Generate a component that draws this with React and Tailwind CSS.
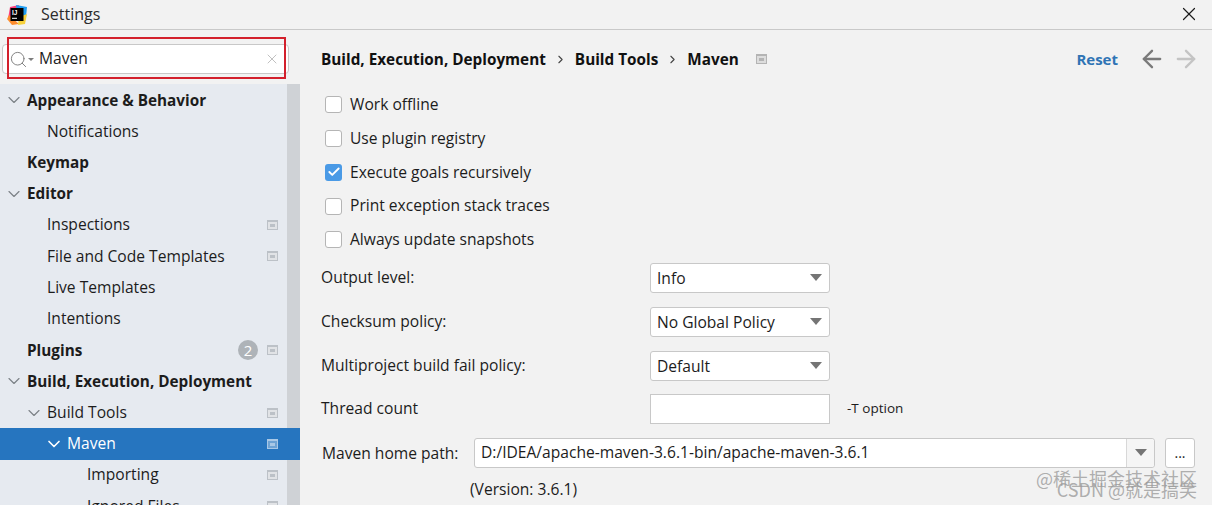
import { ChevronDown, ChevronRight, X, ArrowLeft, ArrowRight, Search, Check } from 'lucide-react';

const font = "font-['Open_Sans','Noto_Sans',sans-serif]";

const ProjectIcon = ({ inner = '#ffffff', opacity = 0.55 }) => (
  <svg width="11" height="10" viewBox="0 0 11 10" className="shrink-0 block">
    <rect x="0" y="0" width="11" height="10" fill="currentColor" />
    <rect x="1" y="2" width="9" height="7" fill={inner} fillOpacity={opacity} />
    <rect x="3" y="4" width="5" height="3" fill="currentColor" />
  </svg>
);

const treeItems = [
  { label: 'Appearance & Behavior', bold: true, arrow: true, indent: 0 },
  { label: 'Notifications', indent: 1 },
  { label: 'Keymap', bold: true, indent: 0 },
  { label: 'Editor', bold: true, arrow: true, indent: 0 },
  { label: 'Inspections', indent: 1, project: true },
  { label: 'File and Code Templates', indent: 1, project: true },
  { label: 'Live Templates', indent: 1 },
  { label: 'Intentions', indent: 1 },
  { label: 'Plugins', bold: true, indent: 0, badge: '2', project: true },
  { label: 'Build, Execution, Deployment', bold: true, arrow: true, indent: 0 },
  { label: 'Build Tools', indent: 1, arrow: true, project: true },
  { label: 'Maven', indent: 2, arrow: true, project: true, selected: true },
  { label: 'Importing', indent: 3, project: true },
  { label: 'Ignored Files', indent: 3, project: true },
];

const indentClass = ['pl-[27px]', 'pl-[47px]', 'pl-[67px]', 'pl-[87px]'];
const arrowClass = ['left-[4px]', 'left-[24px]', 'left-[44px]', 'left-[64px]'];

const TreeRow = ({ item }) => (
  <div className={`relative h-[31.25px] shrink-0 flex items-center pr-[22px] ${indentClass[item.indent]} ${item.selected ? 'bg-[#2675bf] text-white' : 'text-[#1c1c1c]'} ${item.bold ? 'font-bold text-[15.3px]' : 'text-[15.6px]'}`}>
    {item.arrow && (
      <ChevronDown size={20} strokeWidth={item.selected ? 2 : 1.4} className={`absolute ${arrowClass[item.indent]} ${item.selected ? 'text-white' : 'text-[#7d8287]'}`} />
    )}
    <span className="flex-1 whitespace-nowrap">{item.label}</span>
    {item.badge && (
      <span className="w-[20px] h-[20px] mr-[9px] rounded-full bg-[#aeb3b8] text-white text-[15px] font-normal flex items-center justify-center">{item.badge}</span>
    )}
    {item.project && (
      <span className={item.selected ? 'text-[#a9c8e6]' : 'text-[#bcc1c7]'}>
        {item.selected ? <ProjectIcon inner="#2675bf" opacity={0.45} /> : <ProjectIcon />}
      </span>
    )}
  </div>
);

const CheckRow = ({ label, checked }) => (
  <div className="h-[33.75px] flex items-center gap-[8px] pl-[25px]">
    {checked ? (
      <span className="w-[17px] h-[17px] rounded-[3px] bg-[#4a9ae6] flex items-center justify-center">
        <Check size={14} strokeWidth={3.2} className="text-white" />
      </span>
    ) : (
      <span className="w-[17px] h-[17px] rounded-[3px] border border-[#b5b5b5] bg-white" />
    )}
    <span className="text-[15.6px] text-[#1c1c1c]">{label}</span>
  </div>
);

const Caret = () => (
  <span className="w-0 h-0 border-x-[6px] border-x-transparent border-t-[7px] border-t-[#757575]" />
);

const SelectRow = ({ label, value }) => (
  <div className="h-[44px] flex items-center">
    <span className="w-[350px] pl-[21px] text-[15.6px] text-[#1c1c1c]">{label}</span>
    <div className="w-[180px] h-[30px] pl-[6px] pr-[7px] rounded-[3px] border border-[#c8c8c8] bg-white flex items-center justify-between text-[15.6px] text-[#1c1c1c]">
      <span className="mt-[2px]">{value}</span>
      <Caret />
    </div>
  </div>
);

export default function App() {
  return (
    <div className={`w-[1212px] h-[505px] overflow-hidden bg-[#f2f2f2] flex flex-col ${font}`}>
      <div className="h-[30px] shrink-0 border-b border-[#c9c9c9] flex items-center pl-[7px] pr-[12px]">
        <svg width="20" height="20" viewBox="0 0 20 20" className="shrink-0">
          <path d="M3 2 L12 0 L8 12 L1 14 Z" fill="#fc3f7a" />
          <path d="M9 0 L20 2 L19 12 L10 8 Z" fill="#1f9cf0" />
          <path d="M2 10 L12 19 L5 20 L0 14 Z" fill="#fd8d2e" />
          <path d="M12 12 L20 9 L18 19 L11 20 Z" fill="#f7d13c" />
          <rect x="3.5" y="3" width="13" height="13" fill="#000" />
          <text x="5" y="10" fontSize="6.5" fontWeight="700" fill="#fff" fontFamily="'Liberation Sans',sans-serif">IJ</text>
          <rect x="5" y="12.8" width="5" height="1" fill="#fff" />
        </svg>
        <span className="ml-[14px] text-[16px] text-[#2b2b2b] flex-1 -mt-[2px]">Settings</span>
        <X size={22} strokeWidth={1.3} className="text-[#1c1c1c] -mt-[2px]" />
      </div>

      <div className="flex-1 min-h-0 flex">
        <div className="w-[300px] shrink-0 bg-[#e6eaf0] flex flex-col relative overflow-hidden">
          <div className="h-[54px] shrink-0 bg-[#f2f2f2] pl-[2px] pr-[11px] pt-[14px]">
            <div className="h-[30px] bg-white rounded-[4px] border border-[#c8c8c8] flex items-center pl-[6px] pr-[8px] text-[15.6px] text-[#1c1c1c]">
              <Search size={19} strokeWidth={1.2} className="text-[#7d7d7d]" />
              <span className="w-0 h-0 border-x-[3px] border-x-transparent border-t-[3px] border-t-[#7d7d7d]" />
              <span className="ml-[5px] flex-1">Maven</span>
              <X size={16} strokeWidth={1.1} className="text-[#a8a8a8]" />
            </div>
          </div>
          <div className="absolute left-[7px] top-[7px] w-[279px] h-[42px] border-2 border-[#d3202c]" />
          <div className="absolute right-0 top-[54px] bottom-0 w-[13px] bg-[#cfd2d6]" />
          <div className="flex flex-col pt-[0.5px]">
            {treeItems.map((item) => (
              <TreeRow key={item.label} item={item} />
            ))}
          </div>
        </div>

        <div className="flex-1 min-w-0 relative">
          <div className="h-[58px] flex items-center pl-[21px] pr-[12px] text-[15.3px] text-[#111]">
            <span className="font-bold">Build, Execution, Deployment</span>
            <ChevronRight size={13} strokeWidth={2} className="mx-[8px] text-[#444]" />
            <span className="font-bold">Build Tools</span>
            <ChevronRight size={13} strokeWidth={2} className="mx-[8px] text-[#444]" />
            <span className="font-bold">Maven</span>
            <span className="ml-[17px] text-[#b4b4b4]">
              <ProjectIcon />
            </span>
            <span className="ml-auto font-bold text-[15px] text-[#2f74b5]">Reset</span>
            <ArrowLeft size={28} strokeWidth={2} className="ml-[20px] text-[#7a7a7a]" />
            <ArrowRight size={28} strokeWidth={2} className="ml-[6px] text-[#c4c4c4]" />
          </div>

          <div className="flex flex-col">
            <CheckRow label="Work offline" />
            <CheckRow label="Use plugin registry" />
            <CheckRow label="Execute goals recursively" checked />
            <CheckRow label="Print exception stack traces" />
            <CheckRow label="Always update snapshots" />
            <div className="-mt-[1px]">
              <SelectRow label="Output level:" value="Info" />
            </div>
            <SelectRow label="Checksum policy:" value="No Global Policy" />
            <SelectRow label="Multiproject build fail policy:" value="Default" />
            <div className="h-[43px] flex items-center">
              <span className="w-[350px] pl-[21px] -mt-[2px] text-[15.6px] text-[#1c1c1c]">Thread count</span>
              <div className="w-[180px] h-[30px] border border-[#c8c8c8] bg-white" />
              <span className="ml-[17px] -mt-[2px] text-[13.5px] text-[#1c1c1c]">-T option</span>
            </div>
            <div className="h-[44px] flex items-center pl-[22px]">
              <span className="w-[152px] mt-[2px] text-[15.6px] text-[#1c1c1c]">Maven home path:</span>
              <div className="w-[681px] h-[30px] rounded-[3px] border border-[#c8c8c8] bg-white flex items-center text-[15.6px] text-[#1c1c1c]">
                <span className="flex-1 pl-[6px]">D:/IDEA/apache-maven-3.6.1-bin/apache-maven-3.6.1</span>
                <span className="w-[28px] h-full border-l border-[#d8d8d8] bg-[#f5f5f5] rounded-r-[3px] flex items-center justify-center">
                  <Caret />
                </span>
              </div>
              <div className="ml-[10px] w-[30px] h-[30px] rounded-[3px] border border-[#c8c8c8] bg-white flex items-center justify-center text-[14px] text-[#1c1c1c] leading-none">...</div>
            </div>
            <div className="mt-[3px] pl-[170px] text-[15.6px] text-[#1c1c1c]">(Version: 3.6.1)</div>
          </div>

          <div className="absolute right-[15px] bottom-[6px] flex flex-col items-end text-[18px] leading-[20px] text-[#9b9b9b]/80 font-['Noto_Sans_CJK_SC',sans-serif]">
            <span>@稀土掘金技术社区</span>
            <span className="-mt-[9px]">CSDN @就是搞笑</span>
          </div>
        </div>
      </div>
    </div>
  );
}
